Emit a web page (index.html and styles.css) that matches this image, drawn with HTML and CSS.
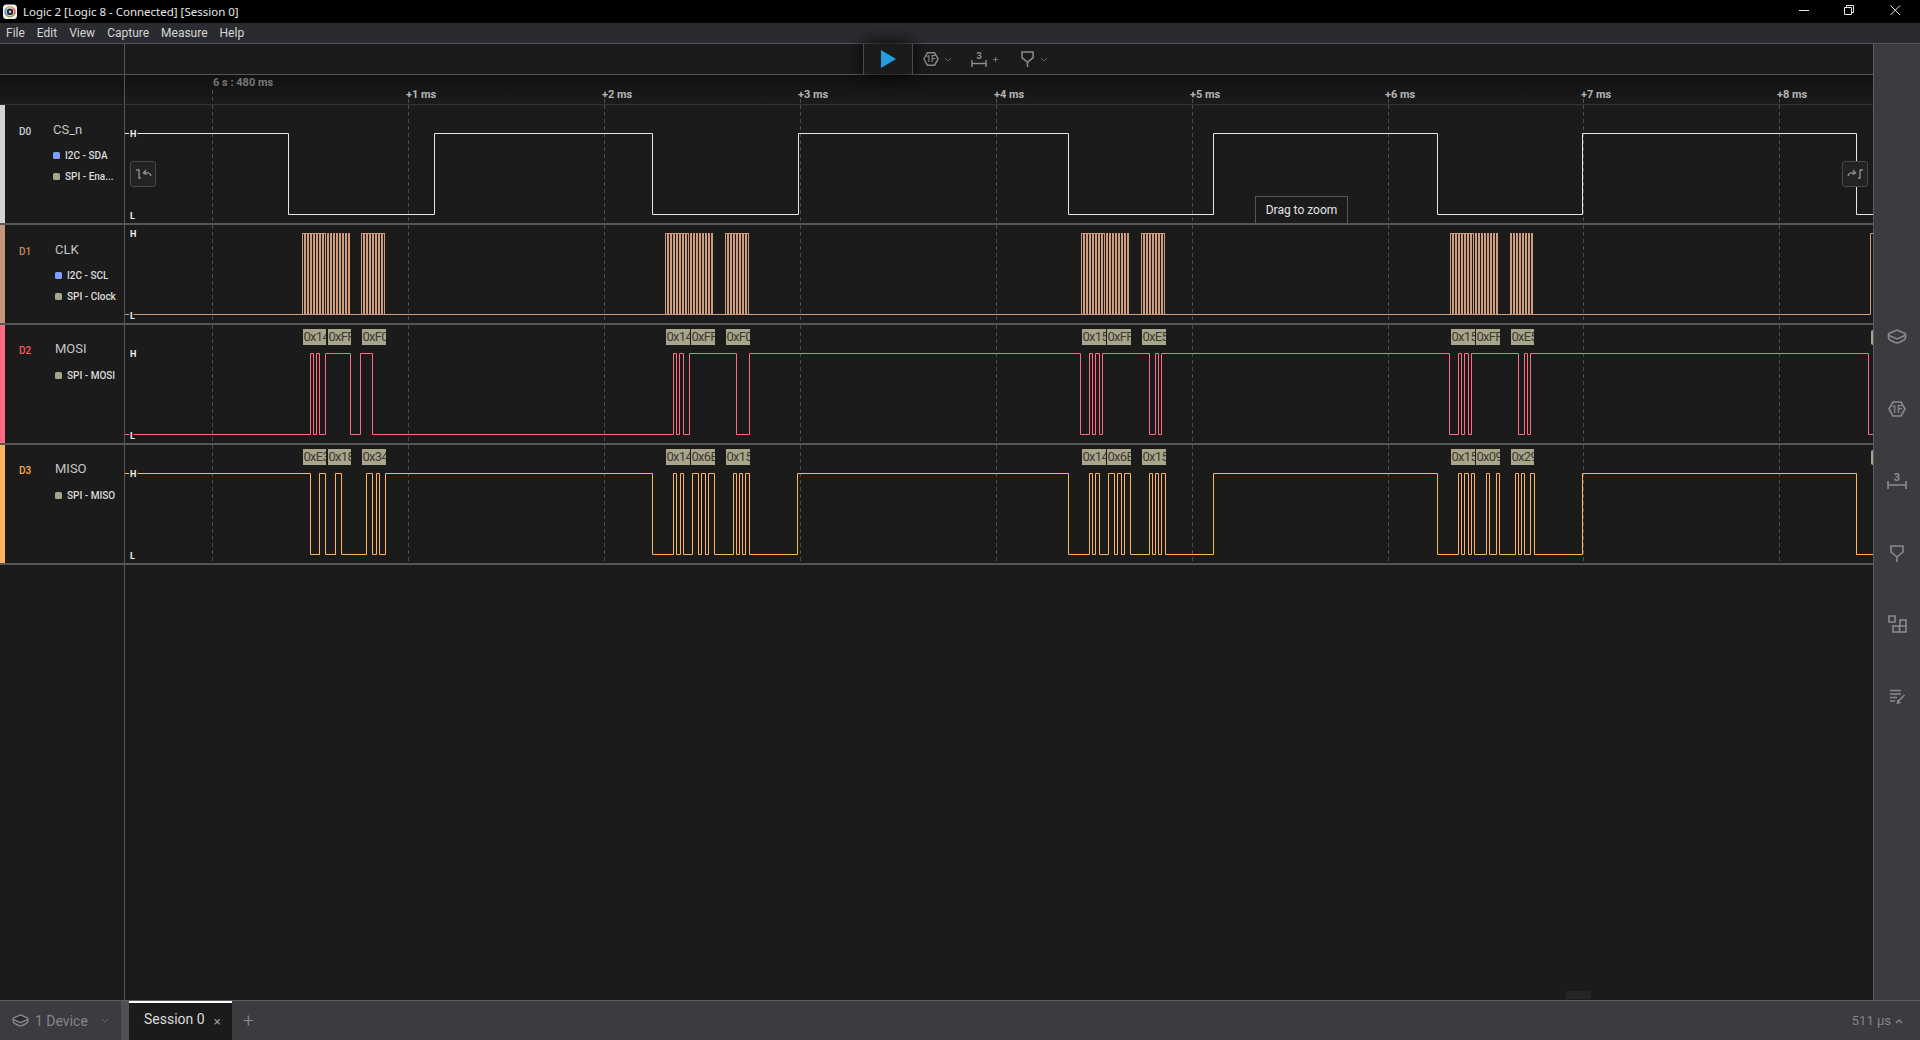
FILE: index.html
```html
<!DOCTYPE html>
<html lang="en">
<head>
    <meta charset="UTF-8">
    <meta name="viewport" content="width=device-width, initial-scale=1.0">
    <title>Logic 2 [Logic 8 - Connected] [Session 0]</title>
    <link rel="stylesheet" href="styles.css">
</head>
<body>
    <header class="titlebar">
        <svg class="app-logo" width="16" height="16" viewBox="0 0 16 16">
            <rect x="1" y="0.5" width="14" height="14.5" rx="3.5" fill="#f4f4f4"/>
            <g fill="none" stroke-width="1.6">
                <path d="M4.500 4.300A5 5 0 0 1 11.500 4.300" stroke="#e2a13a"/>
                <path d="M11.500 4.300A5 5 0 0 1 11.500 11.300" stroke="#d8553f"/>
                <path d="M11.500 11.300A5 5 0 0 1 4.500 11.300" stroke="#7aa04a"/>
                <path d="M4.500 11.300A5 5 0 0 1 4.500 4.300" stroke="#4a86c8"/>
            </g>
            <circle cx="8" cy="7.800" r="3.400" fill="#2a2a2e"/>
            <circle cx="8" cy="7.800" r="1.200" fill="#d8d8d8"/>
        </svg>
        <span class="app-title">Logic 2 [Logic 8 - Connected] [Session 0]</span>
        <div class="win-buttons">
            <svg width="140" height="20" viewBox="0 0 140 20" fill="none" stroke="#e8e8e8">
                <path d="M19 10.500H29"/>
                <path d="M64.500 7.500h7v7h-7zM66.500 7.500V5.500h7v7h-2"/>
                <path d="M110.500 5.500l9.500 9.500M120 5.500l-9.500 9.500"/>
            </svg>
        </div>
    </header>

    <nav class="menubar">
        <span class="menu-item">File</span>
        <span class="menu-item">Edit</span>
        <span class="menu-item">View</span>
        <span class="menu-item">Capture</span>
        <span class="menu-item">Measure</span>
        <span class="menu-item">Help</span>
    </nav>

    <div class="workspace">
        <main class="capture">
            <div class="toolbar">
                <div class="toolbar-side"></div>
                <div class="toolbar-main">
                    <div class="play-box">
                        <svg width="16" height="18" viewBox="0 0 16 18"><path d="M1 0L16 9L1 18Z" fill="#1f9fe0"/></svg>
                    </div>
                    <div class="tool tool-ext">
                        <svg width="16" height="16" viewBox="0 0 18 18" fill="none" stroke="#8c8c8c" stroke-width="1.600">
                            <path d="M5 2h8l4 7-4 7H5L1 9z"/>
                            <text x="9" y="12.500" class="hex-text">1F</text>
                        </svg>
                        <svg width="8" height="5" viewBox="0 0 10 6" fill="none" stroke="#777"><path d="M1 1l4 4 4-4"/></svg>
                    </div>
                    <div class="tool tool-measure">
                        <svg width="16" height="16" viewBox="0 0 18 18" fill="none" stroke="#8c8c8c" stroke-width="1.600">
                            <path d="M1 10v8M17 10v8M1 14h16"/>
                            <text x="9" y="9.500" class="three-text">3</text>
                        </svg>
                        <svg width="7" height="7" viewBox="0 0 9 9" fill="none" stroke="#777" stroke-width="1.200"><path d="M4.500 1v7M1 4.500h7"/></svg>
                    </div>
                    <div class="tool tool-flag">
                        <svg width="13" height="16" viewBox="0 0 14 17" fill="none" stroke="#8c8c8c" stroke-width="1.600">
                            <path d="M1 1h12v6l-6 5-6-5zM7 12v5"/>
                        </svg>
                        <svg width="8" height="5" viewBox="0 0 10 6" fill="none" stroke="#777"><path d="M1 1l4 4 4-4"/></svg>
                    </div>
                </div>
            </div>

            <div class="ruler">
                <div class="ruler-side"></div>
                <svg class="ruler-scale" width="1748" height="29" viewBox="125 75 1748 29">
                    <path class="grid" d="M212.500 90V104M408.500 99V104M604.500 99V104M800.500 99V104M996.500 99V104M1192.500 99V104M1388.500 99V104M1583.500 99V104M1779.500 99V104"/>
                    <text class="start-time" x="213" y="86">6 s : 480 ms</text>
                    <text class="tick" x="406" y="98">+1 ms</text>
                    <text class="tick" x="602" y="98">+2 ms</text>
                    <text class="tick" x="798" y="98">+3 ms</text>
                    <text class="tick" x="994" y="98">+4 ms</text>
                    <text class="tick" x="1190" y="98">+5 ms</text>
                    <text class="tick" x="1385" y="98">+6 ms</text>
                    <text class="tick" x="1581" y="98">+7 ms</text>
                    <text class="tick" x="1777" y="98">+8 ms</text>
                </svg>
            </div>

            <section class="channel channel-d0">
                <div class="chan-info">
                    <span class="chan-id">D0</span>
                    <div class="chan-body">
                        <div class="chan-name">CS_n</div>
                        <div class="analyzer"><i class="dot dot-i2c"></i>I2C - SDA</div>
                        <div class="analyzer"><i class="dot dot-spi"></i>SPI - Ena...</div>
                    </div>
                </div>
                <div class="plot">
                    <svg width="1748" height="118" viewBox="125 105 1748 118">
                        <path class="grid" d="M212.500 105V223M408.500 105V223M604.500 105V223M800.500 105V223M996.500 105V223M1192.500 105V223M1388.500 105V223M1583.500 105V223M1779.500 105V223"/>
                        <path class="wave wave-d0" d="M125 133.500H288.500V214.500H434.500V133.500H652.500V214.500H798.500V133.500H1068.500V214.500H1213.500V133.500H1437.500V214.500H1582.500V133.500H1856.500V214.500H1873"/>
                        <text class="level" x="130" y="136.500">H</text>
                        <text class="level" x="130" y="218.500">L</text>
                    </svg>
                    <button class="nav-btn nav-prev">
                        <svg width="17" height="12" viewBox="0 0 17 12" fill="none" stroke="#8c8c8c" stroke-width="1.400"><path d="M1 2h3v8h2"/><path d="M16 8c-.5-2.500-3.500-4-7-3"/><path d="M11 2L8.500 5l3 1.500"/></svg>
                    </button>
                    <button class="nav-btn nav-next">
                        <svg width="17" height="12" viewBox="0 0 17 12" fill="none" stroke="#8c8c8c" stroke-width="1.400"><path d="M16 2h-3v8h-2"/><path d="M1 8c.5-2.500 3.500-4 7-3"/><path d="M6 2l2.500 3-3 1.500"/></svg>
                    </button>
                    <div class="drag-tip">Drag to zoom</div>
                </div>
            </section>

            <section class="channel channel-d1">
                <div class="chan-info">
                    <span class="chan-id">D1</span>
                    <div class="chan-body">
                        <div class="chan-name">CLK</div>
                        <div class="analyzer"><i class="dot dot-i2c"></i>I2C - SCL</div>
                        <div class="analyzer"><i class="dot dot-spi"></i>SPI - Clock</div>
                    </div>
                </div>
                <div class="plot">
                    <svg width="1748" height="98" viewBox="125 225 1748 98">
                        <defs>
                            <path id="clk8" d="M0 314.500V233.500h1.530V314.500h1.530V233.500h1.530V314.500h1.530V233.500h1.530V314.500h1.530V233.500h1.530V314.500h1.530V233.500h1.530V314.500h1.530V233.500h1.530V314.500h1.530V233.500h1.530V314.500h1.530V233.500h1.530V314.500h1.530"/>
                        </defs>
                        <path class="grid" d="M212.500 225V323M408.500 225V323M604.500 225V323M800.500 225V323M996.500 225V323M1192.500 225V323M1388.500 225V323M1583.500 225V323M1779.500 225V323"/>
                        <path class="wave wave-d1" d="M125 314.500H1870.500V233.500H1873"/>
                        <g class="wave wave-d1 clock-burst">
                            <use href="#clk8" x="302.500"/><use href="#clk8" x="327"/><use href="#clk8" x="361.500"/>
                            <use href="#clk8" x="665.500"/><use href="#clk8" x="690"/><use href="#clk8" x="725.500"/>
                            <use href="#clk8" x="1081.500"/><use href="#clk8" x="1106"/><use href="#clk8" x="1141.500"/>
                            <use href="#clk8" x="1450.500"/><use href="#clk8" x="1475"/><use href="#clk8" x="1510"/>
                        </g>
                        <text class="level" x="130" y="236.500">H</text>
                        <text class="level" x="130" y="318.500">L</text>
                    </svg>
                </div>
            </section>

            <section class="channel channel-d2">
                <div class="chan-info">
                    <span class="chan-id">D2</span>
                    <div class="chan-body">
                        <div class="chan-name">MOSI</div>
                        <div class="analyzer"><i class="dot dot-spi"></i>SPI - MOSI</div>
                    </div>
                </div>
                <div class="plot">
                    <svg width="1748" height="118" viewBox="125 325 1748 118">
                        <path class="grid" d="M212.500 325V443M408.500 325V443M604.500 325V443M800.500 325V443M996.500 325V443M1192.500 325V443M1388.500 325V443M1583.500 325V443M1779.500 325V443"/>
                        <path class="wave wave-d2" d="M125 434.500H310.500V353.500H313.500V434.500H316.500V353.500H319.500V434.500H325.500V353.500H350.500V434.500H360.500V353.500H372.500V434.500H673.500V353.500H676.500V434.500H679.500V353.500H683.500V434.500H689.500V353.500H736.500V434.500H749.500V353.500H1080.500V434.500H1089.500V353.500H1092.500V434.500H1095.500V353.500H1099.500V434.500H1102.500V353.500H1149.500V434.500H1155.500V353.500H1158.500V434.500H1161.500V353.500H1449.500V434.500H1458.500V353.500H1461.500V434.500H1464.500V353.500H1468.500V434.500H1471.500V353.500H1518.500V434.500H1524.500V353.500H1527.500V434.500H1530.500V353.500H1868.500V434.500H1873"/>
                        <text class="level" x="130" y="356.500">H</text>
                        <text class="level" x="130" y="438.500">L</text>
                    </svg>
                    <span class="byte" style="left:178px;width:23px">0x14</span>
                    <span class="byte" style="left:203px;width:23px">0xFF</span>
                    <span class="byte" style="left:237px;width:24px">0xF0</span>
                    <span class="byte" style="left:541px;width:24px">0x14</span>
                    <span class="byte" style="left:566px;width:24px">0xFF</span>
                    <span class="byte" style="left:601px;width:24px">0xF0</span>
                    <span class="byte" style="left:957px;width:24px">0x15</span>
                    <span class="byte" style="left:982px;width:24px">0xFF</span>
                    <span class="byte" style="left:1017px;width:24px">0xE5</span>
                    <span class="byte" style="left:1326px;width:24px">0x15</span>
                    <span class="byte" style="left:1351px;width:24px">0xFF</span>
                    <span class="byte" style="left:1386px;width:23px">0xE5</span>
                    <span class="byte-edge"></span>
                </div>
            </section>

            <section class="channel channel-d3">
                <div class="chan-info">
                    <span class="chan-id">D3</span>
                    <div class="chan-body">
                        <div class="chan-name">MISO</div>
                        <div class="analyzer"><i class="dot dot-spi"></i>SPI - MISO</div>
                    </div>
                </div>
                <div class="plot">
                    <svg width="1748" height="118" viewBox="125 445 1748 118">
                        <path class="grid" d="M212.500 445V563M408.500 445V563M604.500 445V563M800.500 445V563M996.500 445V563M1192.500 445V563M1388.500 445V563M1583.500 445V563M1779.500 445V563"/>
                        <path class="wave wave-d3" d="M125 473.500H310.500V554.500H319.500V473.500H325.500V554.500H335.500V473.500H341.500V554.500H366.500V473.500H372.500V554.500H376.500V473.500H379.500V554.500H385.500V473.500H652.500V554.500H673.500V473.500H676.500V554.500H680.500V473.500H683.500V554.500H692.500V473.500H698.500V554.500H701.500V473.500H705.500V554.500H708.500V473.500H714.500V554.500H733.500V473.500H736.500V554.500H739.500V473.500H742.500V554.500H745.500V473.500H749.500V554.500H797.500V473.500H1068.500V554.500H1089.500V473.500H1092.500V554.500H1095.500V473.500H1099.500V554.500H1108.500V473.500H1114.500V554.500H1117.500V473.500H1121.500V554.500H1124.500V473.500H1130.500V554.500H1149.500V473.500H1152.500V554.500H1155.500V473.500H1158.500V554.500H1161.500V473.500H1165.500V554.500H1213.500V473.500H1437.500V554.500H1458.500V473.500H1461.500V554.500H1464.500V473.500H1468.500V554.500H1471.500V473.500H1474.500V554.500H1486.500V473.500H1489.500V554.500H1496.500V473.500H1499.500V554.500H1515.500V473.500H1518.500V554.500H1521.500V473.500H1524.500V554.500H1530.500V473.500H1534.500V554.500H1582.500V473.500H1856.500V554.500H1873"/>
                        <text class="level" x="130" y="476.500">H</text>
                        <text class="level" x="130" y="558.500">L</text>
                    </svg>
                    <span class="byte" style="left:178px;width:23px">0xE3</span>
                    <span class="byte" style="left:203px;width:23px">0x18</span>
                    <span class="byte" style="left:237px;width:24px">0x34</span>
                    <span class="byte" style="left:541px;width:24px">0x14</span>
                    <span class="byte" style="left:566px;width:24px">0x6B</span>
                    <span class="byte" style="left:601px;width:24px">0x15</span>
                    <span class="byte" style="left:957px;width:24px">0x14</span>
                    <span class="byte" style="left:982px;width:24px">0x6B</span>
                    <span class="byte" style="left:1017px;width:24px">0x15</span>
                    <span class="byte" style="left:1326px;width:24px">0x15</span>
                    <span class="byte" style="left:1351px;width:24px">0x09</span>
                    <span class="byte" style="left:1386px;width:23px">0x29</span>
                    <span class="byte-edge"></span>
                </div>
            </section>

            <div class="empty-area">
                <div class="empty-side"></div>
                <div class="empty-main"><span class="scroll-grip"></span></div>
            </div>
        </main>

        <aside class="sidepanel">
            <svg class="side-icon icon-layers" width="20" height="15" viewBox="0 0 20 15" fill="none" stroke="#8c8c8c" stroke-width="1.600">
                <path d="M10 1l8 3.500c.8.4.8 1.600 0 2l-8 3.500-8-3.500c-.8-.4-.8-1.600 0-2z"/>
                <path d="M1.500 6v3c0 1 1 1.700 2 2.200L8 13.500c1.300.5 2.700.5 4 0l4.500-2.300c1-.5 2-1.200 2-2.200V6"/>
            </svg>
            <svg class="side-icon icon-hex" width="18" height="18" viewBox="0 0 18 18" fill="none" stroke="#8c8c8c" stroke-width="1.600">
                <path d="M5 2h8l4 7-4 7H5L1 9z"/>
                <text x="9" y="12.500" class="hex-text">1F</text>
            </svg>
            <svg class="side-icon icon-measure" width="20" height="18" viewBox="0 0 20 18" fill="none" stroke="#8c8c8c" stroke-width="1.600">
                <path d="M1 9v8M19 9v8M1 13h18"/>
                <text x="10" y="8.500" class="three-text">3</text>
            </svg>
            <svg class="side-icon icon-flag" width="14" height="17" viewBox="0 0 14 17" fill="none" stroke="#8c8c8c" stroke-width="1.600">
                <path d="M1 1h12v6l-6 5-6-5zM7 12v5"/>
            </svg>
            <svg class="side-icon icon-tree" width="19" height="18" viewBox="0 0 19 18" fill="none" stroke="#8c8c8c" stroke-width="1.600">
                <path d="M1 1h6v6H1zM12 5h6v6h-6zM5 11h13v6H5zM11.500 11v6"/>
            </svg>
            <svg class="side-icon icon-notes" width="17" height="15" viewBox="0 0 17 15" fill="none" stroke="#8c8c8c" stroke-width="1.600">
                <path d="M1 1.500h11M1 5h11M1 8.500h7M1 12h5M9 12.500l6.500-6.500"/>
                <path d="M8.500 14l.5-2 1.500 1.500z" fill="#8c8c8c"/>
            </svg>
        </aside>
    </div>

    <footer class="bottombar">
        <div class="device">
            <svg width="17" height="13" viewBox="0 0 20 15" fill="none" stroke="#8c8c8c" stroke-width="1.600">
                <path d="M10 1l8 3.500c.8.4.8 1.600 0 2l-8 3.500-8-3.500c-.8-.4-.8-1.600 0-2z" fill="#2a2a2e"/>
                <path d="M1.500 6v3c0 1 1 1.700 2 2.200L8 13.500c1.300.5 2.700.5 4 0l4.500-2.300c1-.5 2-1.200 2-2.200V6"/>
            </svg>
            <span class="device-name">1 Device</span>
            <svg class="device-chevron" width="8" height="5" viewBox="0 0 10 6" fill="none" stroke="#777"><path d="M1 1l4 4 4-4"/></svg>
        </div>
        <div class="tab-gutter"></div>
        <div class="tab">
            <span class="tab-name">Session 0</span>
            <span class="tab-close">×</span>
        </div>
        <span class="tab-add">+</span>
        <div class="status">
            <span>511 µs</span>
            <svg width="8" height="6" viewBox="0 0 8 6" fill="none" stroke="#8a8a8a" stroke-width="1.400"><path d="M1 5l3-3 3 3"/></svg>
        </div>
    </footer>
</body>
</html>
```

FILE: styles.css
```css
* {
    box-sizing: border-box;
}
html, body {
    height: 100%;
}
body {
    margin: 0;
    display: flex;
    flex-direction: column;
    height: 1040px;
    overflow: hidden;
    background-color: #1b1b1c;
    font-family: Roboto, sans-serif;
    color: #ddd;
}

/* window chrome */
.titlebar {
    display: flex;
    align-items: center;
    height: 23px;
    background-color: #000;
    padding-left: 2px;
}
.app-title {
    margin-left: 5px;
    font-family: "Noto Sans", sans-serif;
    font-size: 11.5px;
    color: #e8e8e8;
}
.win-buttons {
    margin-left: auto;
    height: 20px;
    align-self: flex-start;
}
.menubar {
    display: flex;
    align-items: center;
    height: 21px;
    padding-left: 0;
    background-color: #2a2b30;
    border-bottom: 1px solid #55555a;
}
.menu-item {
    padding: 0 6px;
    font-size: 12px;
    color: #d6d6d6;
}

.workspace {
    display: flex;
    flex: 1;
    min-height: 0;
}
.capture {
    display: flex;
    flex-direction: column;
    width: 1873px;
}

/* toolbar */
.toolbar {
    display: flex;
    height: 31px;
    border-bottom: 1px solid #55555a;
}
.toolbar-side {
    width: 125px;
    border-right: 1px solid #55555a;
}
.toolbar-main {
    display: flex;
    align-items: center;
    flex: 1;
    padding-left: 738px;
}
.play-box {
    display: flex;
    align-items: center;
    justify-content: center;
    width: 50px;
    height: 30px;
    background-color: #1b1b1c;
    border-left: 1px solid #4a4a4f;
    border-right: 1px solid #4a4a4f;
    box-shadow: 0 0 18px #000;
    position: relative;
}
.tool {
    display: flex;
    align-items: center;
}
.tool-ext {
    margin-left: 10px;
    gap: 5px;
}
.tool-measure {
    margin-left: 19px;
    gap: 5px;
}
.tool-flag {
    margin-left: 22px;
    gap: 6px;
}
.hex-text {
    font-family: Roboto, sans-serif;
    font-size: 10px;
    font-weight: 500;
    text-anchor: middle;
    fill: #8c8c8c;
    stroke: none;
}
.three-text {
    font-family: Roboto, sans-serif;
    font-size: 11px;
    font-weight: 700;
    text-anchor: middle;
    fill: #8c8c8c;
    stroke: none;
}

/* time ruler */
.ruler {
    display: flex;
    height: 30px;
    background: linear-gradient(#111, #1b1b1c);
    border-bottom: 1px solid #333336;
}
.ruler-side {
    width: 125px;
    border-right: 1px solid #55555a;
}
.start-time {
    font-size: 11px;
    font-weight: 700;
    fill: #777;
}
.tick {
    font-size: 11px;
    font-weight: 700;
    fill: #b5b5b5;
}
.grid {
    fill: none;
    stroke: #4c4c52;
    stroke-dasharray: 4 3;
}

/* channel rows */
.channel {
    display: flex;
    border-bottom: 2px solid #55555a;
}
.channel-d0, .channel-d2, .channel-d3 {
    height: 120px;
}
.channel-d1 {
    height: 100px;
}
.chan-info {
    display: flex;
    width: 125px;
    flex: none;
    border-right: 1px solid #55555a;
    border-left: 5px solid;
    padding-top: 17px;
}
.chan-id {
    width: 40px;
    margin-top: 2px;
    text-align: center;
    font-size: 10px;
    font-weight: 500;
    line-height: 16px;
}
.chan-body {
    margin-left: 10px;
}
.chan-name {
    height: 16px;
    font-size: 13px;
    line-height: 16px;
    color: #c6c6c6;
}
.analyzer {
    display: flex;
    align-items: center;
    height: 21px;
    font-size: 10px;
    font-weight: 500;
    color: #dcdcdc;
    white-space: nowrap;
}
.chan-name + .analyzer {
    margin-top: 7px;
}
.dot {
    width: 7px;
    height: 7px;
    margin-right: 5px;
    border-radius: 1.5px;
}
.dot-i2c {
    background-color: #7f9eff;
}
.dot-spi {
    background-color: #a9a58b;
}
.channel-d0 .chan-body {
    margin-left: 8px;
}
.channel-d0 .chan-info {
    border-left-color: #d3d3d3;
}
.channel-d1 .chan-info {
    border-left-color: #c4977a;
}
.channel-d2 .chan-info {
    border-left-color: #ff6b81;
    padding-top: 16px;
}
.channel-d3 .chan-info {
    border-left-color: #ffb35c;
    padding-top: 16px;
}
.channel-d2 .chan-name + .analyzer, .channel-d3 .chan-name + .analyzer {
    margin-top: 8px;
}
.channel-d0 .chan-id {
    color: #c9ced6;
}
.channel-d1 .chan-id {
    color: #c98a56;
}
.channel-d2 .chan-id {
    color: #ff5a5f;
}
.channel-d3 .chan-id {
    color: #ffa94d;
}

.plot {
    position: relative;
    flex: 1;
    min-width: 0;
}
.plot svg {
    display: block;
}
.wave {
    fill: none;
    stroke-width: 1;
}
.wave-d0 {
    stroke: #e6e6e6;
}
.wave-d1 {
    stroke: #cf9c7e;
}
.clock-burst {
    shape-rendering: crispEdges;
}
.wave-d2 {
    stroke: #ff6b81;
}
.wave-d3 {
    stroke: #ffb35c;
}
.level {
    font-size: 9px;
    font-weight: 700;
    fill: #eee;
    stroke: #1b1b1c;
    stroke-width: 3px;
    paint-order: stroke;
}
.byte {
    position: absolute;
    top: 4px;
    height: 16px;
    overflow: hidden;
    padding-left: 0.5px;
    background-color: #a9a58b;
    font-size: 13px;
    letter-spacing: -0.7px;
    line-height: 15px;
    color: #3c3a32;
    white-space: nowrap;
}
.byte-edge {
    position: absolute;
    top: 5px;
    right: 0;
    width: 2px;
    height: 15px;
    border-radius: 2px 0 0 2px;
    background-color: #a9a58b;
}
.nav-btn {
    position: absolute;
    top: 56px;
    display: flex;
    align-items: center;
    justify-content: center;
    width: 26px;
    height: 26px;
    padding: 0;
    background-color: #232326;
    border: 1px solid #47474c;
    border-radius: 3px;
}
.nav-prev {
    left: 5px;
}
.nav-next {
    left: 1717px;
}
.drag-tip {
    position: absolute;
    top: 91px;
    left: 1130px;
    width: 93px;
    height: 27px;
    background-color: #1b1b1c;
    border: 1px solid #55555a;
    border-bottom: none;
    font-size: 12px;
    line-height: 26px;
    text-align: center;
    color: #e4e4e4;
}

.empty-area {
    display: flex;
    flex: 1;
}
.empty-side {
    width: 125px;
    border-right: 1px solid #55555a;
}
.empty-main {
    position: relative;
    flex: 1;
}
.scroll-grip {
    position: absolute;
    left: 1441px;
    bottom: 1px;
    width: 25px;
    height: 8px;
    background-color: #252526;
}

/* right panel */
.sidepanel {
    display: flex;
    flex-direction: column;
    align-items: center;
    flex: 1;
    background-color: #3b3b40;
    border-left: 1px solid #5c5c62;
}
.side-icon {
    display: block;
}
.icon-layers {
    margin-top: 285px;
}
.icon-hex {
    margin-top: 56px;
}
.icon-measure {
    margin-top: 54px;
}
.icon-flag {
    margin-top: 55px;
}
.icon-tree {
    margin-top: 53px;
}
.icon-notes {
    margin-top: 56px;
}

/* bottom bar */
.bottombar {
    display: flex;
    align-items: center;
    height: 40px;
    background-color: #3b3b40;
    border-top: 1px solid #5c5c62;
}
.device {
    display: flex;
    align-items: center;
    width: 121px;
    padding-left: 12px;
    font-size: 14px;
    color: #85858a;
}
.device-name {
    margin-left: 6px;
}
.device-chevron {
    margin-left: 13px;
}
.tab-gutter {
    align-self: stretch;
    width: 8px;
    background-color: #505056;
}
.tab {
    display: flex;
    align-items: center;
    align-self: stretch;
    width: 103px;
    padding-left: 15px;
    padding-bottom: 6px;
    background-color: #1b1b1c;
    border-top: 2px solid #fff;
}
.tab-name {
    font-size: 14px;
    color: #dcdcdc;
}
.tab-close {
    margin-left: 9px;
    margin-top: 6px;
    font-size: 13px;
    color: #9a9a9a;
}
.tab-add {
    margin-left: 11px;
    font-size: 19px;
    font-weight: 300;
    color: #8f8f8f;
}
.status {
    display: flex;
    align-items: center;
    gap: 4px;
    margin-left: auto;
    padding-right: 17px;
    font-size: 13px;
    color: #85858a;
}
```
